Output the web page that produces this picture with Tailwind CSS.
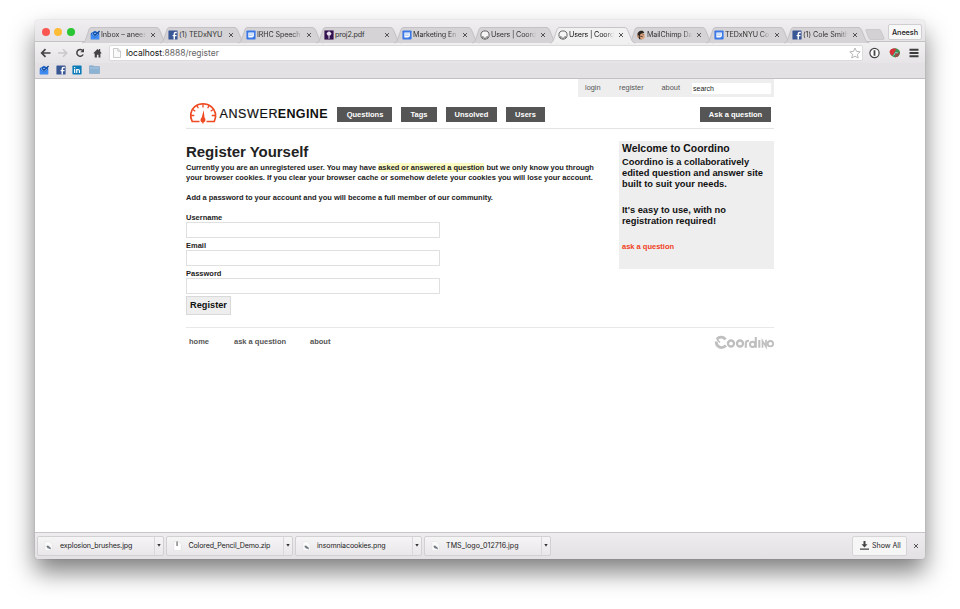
<!DOCTYPE html>
<html lang="en">
<head>
<meta charset="utf-8">
<title>Users | Coordino</title>
<script src="https://cdn.jsdelivr.net/npm/@tailwindcss/browser@4"></script>
</head>
<body class="h-[609px] w-[960px] overflow-hidden bg-white pt-5 pl-[35px] font-['Liberation_Sans',Arial,sans-serif]">
<svg class="hidden">
  <defs>
    <symbol id="inbox" viewBox="0 0 12 12"><path d="M1 4 6 1l5 3v7H1z" fill="#1a5fc4"/><path d="M1 5l5 4 5-4v6H1z" fill="#3f8cf4"/><path d="M2.500 3.500h7v2L6 8 2.500 5.500z" fill="#8cc1ff"/><path d="M3.500 4l2.500 2.300 5.500-5" fill="none" stroke="#164c9e" stroke-width="1.700"/></symbol>
    <symbol id="fb" viewBox="0 0 12 12"><rect x=".5" y=".5" width="11" height="11" rx=".8" fill="#3a5795"/><path d="M10.500 3H9.300C8 3 7.500 3.700 7.500 4.800V11.500M5.500 6.700h4.700" fill="none" stroke="#fff" stroke-width="1.700"/></symbol>
    <symbol id="doc" viewBox="0 0 12 12"><rect x=".5" y=".5" width="11" height="11" rx="1" fill="#3b78e7"/><path d="M2.800 3h6.700v4.500L7.500 9H2.800z" fill="#fff"/><path d="M3.500 4.700H9M3.500 6.500H8" stroke="#8ab4f8" stroke-width=".8"/></symbol>
    <symbol id="nyu" viewBox="0 0 12 12"><rect x=".5" y=".5" width="11" height="11" fill="#34114f"/><path d="M6 6v4.500" stroke="#e9dff0" stroke-width="1.300"/><path d="M3 4.500C3.500 2 5 3 6 1.500 7 3 8.500 2 9 4.500L7.500 6.500h-3z" fill="#e9dff0"/></symbol>
    <symbol id="coord" viewBox="0 0 12 12"><circle cx="6" cy="6" r="4.900" fill="#f5f5f5" stroke="#666" stroke-width="1.200"/><path d="M3.500 9.700V7.500M6 11V9M8.500 9.700V7.500" stroke="#666" stroke-width="1.600"/></symbol>
    <symbol id="chimp" viewBox="0 0 12 12"><path d="M2 7C1 3 4 .5 8 1l2 2-2 1.500L7 11H4z" fill="#2b2421"/><path d="M5 6c0-2 4-3 5-1l.8 3.500L8.500 11H5.500L4.500 8z" fill="#d9a27c"/><path d="M5 7.500l3 .5M8 5.500h1" stroke="#2b2421" stroke-width=".9"/><circle cx="2.600" cy="7.700" r="1.300" fill="#c08058"/></symbol>
    <symbol id="tab" viewBox="0 0 88 17"><path d="M0 16C2.500 15.500 3 14.500 4 11.500L6.500 4C7.300 1.300 8 .5 10 .5H74C76 .5 77 1.300 78 4L81 11.500C82 14.500 83 15.500 85.500 16" stroke="#bcbabc" stroke-width=".8"/></symbol>
    <symbol id="file" viewBox="0 0 10 11"><path d="M1 .5h5L9 3.500v7H1z" fill="#fafafa" stroke="#e0e0e0" stroke-width=".5"/><path d="M2.500 5.500l2-.5 3 2.500V9.300L6 8.500 4 8z" fill="#727b86"/></symbol>
  </defs>
</svg>

<main class="flex h-[539px] w-[890px] flex-col overflow-hidden rounded-[4px] bg-white shadow-[0_13px_25px_rgba(0,0,0,0.5),0_0_1px_rgba(0,0,0,0.35)]">
  <!-- Tab strip -->
  <div class="flex h-[22px] shrink-0 border-b border-[#c4c2c4] bg-linear-to-b from-[#f0eef0] to-[#e5e3e5] pt-[7px] font-[Inter,sans-serif] text-[7.200px] tracking-[-0.060px] text-[#333]">
    <div class="flex w-[47px] shrink-0 gap-[4.500px] pt-[1px] pl-[6.500px]">
      <i class="size-[8px] rounded-full bg-[#fc5652]"></i><i class="size-[8px] rounded-full bg-[#fdbc38]"></i><i class="size-[8px] rounded-full bg-[#29c535]"></i>
    </div>
    <div class="relative flex w-[78px] shrink-0 items-center pt-[1px] pl-2 leading-[14px]"><svg class="absolute top-0 left-0 h-[17px] w-[88px] fill-[#d5d3d5]"><use href="#tab"/></svg><svg class="relative mr-[1px] size-[10px] shrink-0"><use href="#inbox"/></svg><span class="relative w-[45px] shrink-0 mask-r-from-80% mask-r-to-100% whitespace-nowrap">Inbox – anees</span><svg class="relative ml-[4px] size-[6px] shrink-0" viewBox="0 0 6 6"><path d="M1 1l4 4M5 1l-4 4" stroke="#444" stroke-width=".9"/></svg></div>
    <div class="relative flex w-[78px] shrink-0 items-center pt-[1px] pl-2 leading-[14px]"><svg class="absolute top-0 left-0 h-[17px] w-[88px] fill-[#d5d3d5]"><use href="#tab"/></svg><svg class="relative mr-[1px] size-[10px] shrink-0"><use href="#fb"/></svg><span class="relative w-[45px] shrink-0 whitespace-nowrap">(1) TEDxNYU</span><svg class="relative ml-[4px] size-[6px] shrink-0" viewBox="0 0 6 6"><path d="M1 1l4 4M5 1l-4 4" stroke="#444" stroke-width=".9"/></svg></div>
    <div class="relative flex w-[78px] shrink-0 items-center pt-[1px] pl-2 leading-[14px]"><svg class="absolute top-0 left-0 h-[17px] w-[88px] fill-[#d5d3d5]"><use href="#tab"/></svg><svg class="relative mr-[1px] size-[10px] shrink-0"><use href="#doc"/></svg><span class="relative w-[45px] shrink-0 mask-r-from-80% mask-r-to-100% tracking-[-0.150px] whitespace-nowrap">IRHC Speech</span><svg class="relative ml-[4px] size-[6px] shrink-0" viewBox="0 0 6 6"><path d="M1 1l4 4M5 1l-4 4" stroke="#444" stroke-width=".9"/></svg></div>
    <div class="relative flex w-[78px] shrink-0 items-center pt-[1px] pl-2 leading-[14px]"><svg class="absolute top-0 left-0 h-[17px] w-[88px] fill-[#d5d3d5]"><use href="#tab"/></svg><svg class="relative mr-[1px] size-[10px] shrink-0"><use href="#nyu"/></svg><span class="relative w-[45px] shrink-0 tracking-[-0.150px] whitespace-nowrap">proj2.pdf</span><svg class="relative ml-[4px] size-[6px] shrink-0" viewBox="0 0 6 6"><path d="M1 1l4 4M5 1l-4 4" stroke="#444" stroke-width=".9"/></svg></div>
    <div class="relative flex w-[78px] shrink-0 items-center pt-[1px] pl-2 leading-[14px]"><svg class="absolute top-0 left-0 h-[17px] w-[88px] fill-[#d5d3d5]"><use href="#tab"/></svg><svg class="relative mr-[1px] size-[10px] shrink-0"><use href="#doc"/></svg><span class="relative w-[45px] shrink-0 mask-r-from-80% mask-r-to-100% tracking-[-0.100px] whitespace-nowrap">Marketing En</span><svg class="relative ml-[4px] size-[6px] shrink-0" viewBox="0 0 6 6"><path d="M1 1l4 4M5 1l-4 4" stroke="#444" stroke-width=".9"/></svg></div>
    <div class="relative flex w-[78px] shrink-0 items-center pt-[1px] pl-2 leading-[14px]"><svg class="absolute top-0 left-0 h-[17px] w-[88px] fill-[#d5d3d5]"><use href="#tab"/></svg><svg class="relative mr-[1px] size-[10px] shrink-0"><use href="#coord"/></svg><span class="relative w-[45px] shrink-0 mask-r-from-80% mask-r-to-100% tracking-[-0.150px] whitespace-nowrap">Users | Coord</span><svg class="relative ml-[4px] size-[6px] shrink-0" viewBox="0 0 6 6"><path d="M1 1l4 4M5 1l-4 4" stroke="#444" stroke-width=".9"/></svg></div>
    <div class="relative z-10 flex w-[78px] shrink-0 items-center pt-[1px] pl-2 leading-[14px] text-[#111]"><svg class="absolute top-0 left-0 h-[17px] w-[88px] fill-[#f2f1f2]"><use href="#tab"/></svg><svg class="relative mr-[1px] size-[10px] shrink-0"><use href="#coord"/></svg><span class="relative w-[45px] shrink-0 mask-r-from-80% mask-r-to-100% tracking-[-0.150px] whitespace-nowrap">Users | Coord</span><svg class="relative ml-[4px] size-[6px] shrink-0" viewBox="0 0 6 6"><path d="M1 1l4 4M5 1l-4 4" stroke="#444" stroke-width=".9"/></svg></div>
    <div class="relative flex w-[78px] shrink-0 items-center pt-[1px] pl-2 leading-[14px]"><svg class="absolute top-0 left-0 h-[17px] w-[88px] fill-[#d5d3d5]"><use href="#tab"/></svg><svg class="relative mr-[1px] size-[10px] shrink-0"><use href="#chimp"/></svg><span class="relative w-[45px] shrink-0 mask-r-from-80% mask-r-to-100% tracking-[-0.150px] whitespace-nowrap">MailChimp Da</span><svg class="relative ml-[4px] size-[6px] shrink-0" viewBox="0 0 6 6"><path d="M1 1l4 4M5 1l-4 4" stroke="#444" stroke-width=".9"/></svg></div>
    <div class="relative flex w-[78px] shrink-0 items-center pt-[1px] pl-2 leading-[14px]"><svg class="absolute top-0 left-0 h-[17px] w-[88px] fill-[#d5d3d5]"><use href="#tab"/></svg><svg class="relative mr-[1px] size-[10px] shrink-0"><use href="#doc"/></svg><span class="relative w-[45px] shrink-0 mask-r-from-80% mask-r-to-100% tracking-[-0.120px] whitespace-nowrap">TEDxNYU Co</span><svg class="relative ml-[4px] size-[6px] shrink-0" viewBox="0 0 6 6"><path d="M1 1l4 4M5 1l-4 4" stroke="#444" stroke-width=".9"/></svg></div>
    <div class="relative flex w-[78px] shrink-0 items-center pt-[1px] pl-2 leading-[14px]"><svg class="absolute top-0 left-0 h-[17px] w-[88px] fill-[#d5d3d5]"><use href="#tab"/></svg><svg class="relative mr-[1px] size-[10px] shrink-0"><use href="#fb"/></svg><span class="relative w-[45px] shrink-0 mask-r-from-80% mask-r-to-100% whitespace-nowrap">(1) Cole Smith</span><svg class="relative ml-[4px] size-[6px] shrink-0" viewBox="0 0 6 6"><path d="M1 1l4 4M5 1l-4 4" stroke="#444" stroke-width=".9"/></svg></div>
    <svg class="mt-[2px] ml-[3px] h-[12px] w-[20px] shrink-0" viewBox="0 0 20 12"><path d="M.8 1.200Q.5.500 1.500.500H14Q15.500.500 16 2L19 9Q19.500 10.500 18 10.500H6Q4.300 10.500 3.700 9z" fill="#d3d1d3" stroke="#bfbdbf" stroke-width=".6"/></svg>
    <div class="mt-[-3px] ml-[3px] h-[16px] w-[34px] shrink-0 rounded-[2px] border border-[#d0ced0] bg-[#f9f8f9] text-center text-[7.300px] leading-[15px] font-medium text-[#222]">Aneesh</div>
  </div>
  <!-- Toolbar -->
  <div class="flex h-[21px] shrink-0 items-center bg-linear-to-b from-[#f2f1f2] to-[#e6e4e6] pl-[5px]">
    <svg class="h-[12px] w-[66px] shrink-0" viewBox="0 0 66 12" fill="none" stroke="#444"><path d="M10.500 6H2M5.500 2.200 1.700 6l3.800 3.800" stroke-width="1.700"/><path d="M18 6h8.500M23 2.200 26.800 6 23 9.800" stroke="#c9c7c9" stroke-width="1.400"/><path d="M43 3.800A3.400 3.400 0 1 0 43.200 7.500" stroke-width="1.500"/><path d="M44 1.500V5.200H40.300z" fill="#444" stroke="none"/><path d="M53.500 6 57.500 2 59 3.300V2h1.200v2.500L61.600 6l-.7.700-.5-.4v4.200H58.500V7.800H56.900v2.700H54.700V6.300l-.6.500z" fill="#444" stroke="none"/></svg>
    <div class="ml-[3px] flex h-[16px] w-[754px] shrink-0 items-center rounded-[2px] border border-[#dcdadc] bg-white">
      <svg class="ml-[3px] h-[10px] w-[8px]" viewBox="0 0 8 10"><path d="M.5.500H4.800L7.500 3.200V9.500H.5zM4.800.500V3.200H7.500" fill="#fafafa" stroke="#b5b5b5" stroke-width=".7"/></svg>
      <span class="ml-[5px] font-[Inter,sans-serif] text-[8.500px] leading-[14px] tracking-[-0.030px] whitespace-nowrap text-[#666]"><span class="text-[#111]">localhost</span>:8888/register</span>
      <svg class="mr-[1px] ml-auto size-[12px]" viewBox="0 0 12 12"><path d="M6 1l1.500 3.400 3.700.4-2.800 2.500.8 3.700L6 9.100 2.800 11l.8-3.700L.8 4.800l3.700-.4z" fill="#fff" stroke="#999" stroke-width=".7"/></svg>
    </div>
    <svg class="ml-[5px] h-[12px] w-[54px] shrink-0" viewBox="0 0 54 12"><circle cx="6.500" cy="6" r="4.600" fill="#fff" stroke="#444" stroke-width="1.200"/><path d="M6.500 3.300v5.400" stroke="#444" stroke-width="1.800"/><path d="M22 6.500C21 3 25 .5 28.500 1.500S33 6 31 8.500 24 11 22 6.500z" fill="#3f9455"/><path d="M21.500 5C22 1.500 26 .8 28.500 2.300L27 4l-2 4.500-2-.5z" fill="#d9303a"/><path d="M27.500 6 32 5.500 30 9.500 27 10.500z" fill="#a04a48"/><path d="M25.500 8.500l2-3 2.500.5" stroke="#7ed5c9" fill="none"/><path d="M41.500 2.700h9M41.500 6h9M41.500 9.300h9" stroke="#3c3c3c" stroke-width="1.900"/></svg>
  </div>
  <!-- Bookmarks bar -->
  <div class="flex h-[16px] shrink-0 items-center gap-[6.500px] border-b border-[#c2c0c2] bg-[#e3e1e4] pb-[2px] pl-[4px]">
    <svg class="size-[10px]"><use href="#inbox"/></svg>
    <svg class="size-[10px]"><use href="#fb"/></svg>
    <svg class="size-[10px]" viewBox="0 0 12 12"><rect x=".5" y=".5" width="11" height="11" rx="1" fill="#0d7bb8"/><path d="M3.200 4.800V9.500M3.200 2.300v1.500M5.700 4.800V9.500M5.700 7C5.700 4.800 8.900 4.800 8.900 7V9.500" fill="none" stroke="#fff" stroke-width="1.400"/></svg>
    <svg class="h-[9px] w-[11px]" viewBox="0 0 11 9"><path d="M.5.800h3.800l.8.800h5.400V8.500H.5z" fill="#8db3d4" stroke="#7fa3c4" stroke-width=".6"/><path d="M.8 3h9.400" stroke="#b3cde3" stroke-width=".8"/></svg>
  </div>

  <!-- Page -->
  <div class="flex min-h-0 flex-1 flex-col pl-[151px]">
    <div class="flex w-[588px] flex-1 flex-col font-bold text-[#222]">
      <nav class="ml-auto flex h-[18px] w-[196px] items-center bg-[#eee] pl-[7px] text-[7.400px] font-normal text-[#555]">
        <a class="w-[34px]">login</a><a class="w-[42.500px]">register</a><a class="w-[30px]">about</a>
        <span class="h-[11px] w-[79px] bg-white pl-[1.500px] text-[7px] leading-[11px] text-[#222]">search</span>
      </nav>
      <header class="flex h-[32px] shrink-0 items-start border-b border-[#e3e3e3] text-[7.500px] leading-[15px] text-white">
        <svg class="mt-[5px] h-[24px] w-[151px] shrink-0" viewBox="0 0 151 24">
          <path d="M13.500 19.500H6.200C3.500 14 4.500 8 8.500 4.800 13.500.7 20.500.700 25.500 4.800 29.500 8 31 14 28.300 19.500H20.500" fill="none" stroke="#ee4a23" stroke-width="1.700"/>
          <path d="M17 2v3.500M11 3.500l1.300 2.800M23 3.500l-1.300 2.800M6.800 7.500l2.500 1.800M27.200 7.500l-2.500 1.800M4.800 13.500H8.300M29.200 13.500H25.700" stroke="#ee4a23" stroke-width="1.300"/>
          <path d="M17.700 8 18.500 15.500C20.200 17.500 19.500 20 17.500 20.500L17 22.500 16.300 20.500C14.300 20 13.800 17.500 15.700 15.500z" fill="#ee4a23"/>
          <text x="33.500" y="15.700" font-size="12.500" font-weight="400" fill="#111" stroke="#111" stroke-width=".2" textLength="58" lengthAdjust="spacing">ANSWER</text>
          <text x="91.800" y="15.700" font-size="12.500" font-weight="700" fill="#111" textLength="49.700" lengthAdjust="spacing">ENGINE</text>
        </svg>
        <a class="mt-[10px] mr-[9px] w-[55px] bg-[#555] pl-[1px] text-center">Questions</a>
        <a class="mt-[10px] mr-[9px] w-[36px] bg-[#555] text-center">Tags</a>
        <a class="mt-[10px] mr-[9px] w-[51px] bg-[#555] text-center">Unsolved</a>
        <a class="mt-[10px] w-[39px] bg-[#555] text-center">Users</a>
        <a class="mt-[10px] mr-[3px] ml-auto w-[71px] bg-[#555] text-center">Ask a question</a>
      </header>
      <div class="flex h-[199px] shrink-0 justify-between border-b border-[#e8e8e8] pt-[12px]">
        <section class="w-[420px] text-[7.500px] leading-[9.500px]">
          <h1 class="h-[22px] text-[15px] leading-[21px] tracking-[-0.030px] whitespace-nowrap">Register Yourself</h1>
          <p class="tracking-[-0.033px] whitespace-nowrap">Currently you are an unregistered user. You may have <span class="bg-[#fbfbc4]">asked or answered a question</span> but we only know you through<br>your browser cookies. If you clear your browser cache or somehow delete your cookies you will lose your account.</p>
          <p class="mt-[11px] tracking-[-0.033px] whitespace-nowrap">Add a password to your account and you will become a full member of our community.</p>
          <form class="mt-[9.500px]">
            <label class="block h-[10px] leading-[12px]">Username</label><div class="mb-[2px] h-[16px] w-[254px] border border-[#e0e0e0]"></div>
            <label class="block h-[10px] leading-[12px]">Email</label><div class="mb-[2px] h-[16px] w-[254px] border border-[#e0e0e0]"></div>
            <label class="block h-[10px] leading-[12px]">Password</label><div class="mb-[2px] h-[16px] w-[254px] border border-[#e0e0e0]"></div>
            <button type="button" class="block h-[19px] w-[45px] border border-[#d9d9d9] bg-[#eee] text-[9.200px] leading-[17px] font-bold text-[#111]">Register</button>
          </form>
        </section>
        <aside class="h-[128px] w-[155px] bg-[#eee] pt-[1px] pl-[3px] text-[9.300px] leading-[11.200px] text-[#111]">
          <h2 class="h-[15px] text-[10.450px] leading-[14px]">Welcome to Coordino</h2>
          <p class="whitespace-nowrap">Coordino is a collaboratively<br>edited question and answer site<br>built to suit your needs.</p>
          <p class="mt-[14px] whitespace-nowrap">It's easy to use, with no<br>registration required!</p>
          <p class="mt-[14px] text-[7.500px] text-[#f0401c]">ask a question</p>
        </aside>
      </div>
      <footer class="flex h-[28px] items-center pl-[3px] text-[7.500px] text-[#555]">
        <a class="w-[45px]">home</a><a class="w-[76px]">ask a question</a><a>about</a>
        <svg class="ml-auto h-[15px] w-[60px]" viewBox="0 0 60 15" fill="none" stroke="#bfbfbf" stroke-width="2.300" role="img" aria-label="Coordino"><path d="M11.500 4.500C9.500 1.200 4.500 1.300 3 4.500M2.200 6.500C2 12.500 8 14.300 12 10.500" stroke-width="2.800"/><path d="M3 4.500 6 7.500" stroke-width="1.500"/><circle cx="17" cy="8.500" r="3"/><circle cx="26" cy="8.500" r="3"/><path d="M31.800 12.800V8.500Q31.800 5.500 35 5.800M41.800 2V12.800M45.300 5v7.800" stroke-width="2.100"/><circle cx="38.600" cy="9.300" r="2.600" stroke-width="2"/><path d="M48.500 12.800V6L52 11.500V4.800" stroke-width="1.700"/><circle cx="56.400" cy="8.700" r="2.700" stroke-width="1.800"/></svg>
      </footer>
    </div>
  </div>

  <!-- Downloads shelf -->
  <div class="flex h-[27px] shrink-0 items-center gap-[2px] border-t border-[#c8c6c8] bg-linear-to-b from-[#eeecee] to-[#e3e1e3] pr-[6px] pb-[1px] pl-[2px] font-[Inter,sans-serif] text-[7.100px] text-[#222]">
    <div class="flex h-[20px] w-[127px] items-center rounded-[2px] border border-[#d2d0d2] bg-linear-to-b from-[#f6f5f6] to-[#e9e7e9]"><svg class="ml-[6px] h-[10px] w-[9px]"><use href="#file"/></svg><span class="ml-[7px] pt-[1px] tracking-[-0.130px]">explosion_brushes.jpg</span><span class="ml-auto flex h-full w-[9px] items-center justify-center border-l border-[#dad8da]"><svg class="h-[3px] w-[4px]" viewBox="0 0 4 3"><path d="M.3 0h3.400L2 2.700z" fill="#333"/></svg></span></div>
    <div class="flex h-[20px] w-[127px] items-center rounded-[2px] border border-[#d2d0d2] bg-linear-to-b from-[#f6f5f6] to-[#e9e7e9]"><svg class="ml-[6px] h-[10px] w-[9px]" viewBox="0 0 10 11"><path d="M1 .5h5L9 3.500v7H1z" fill="#fff" stroke="#d8d8d8" stroke-width=".5"/><path d="M4.500.500v5" stroke="#555" stroke-width="1.200"/></svg><span class="ml-[6.500px] pt-[1px] tracking-[-0.160px]">Colored_Pencil_Demo.zip</span><span class="ml-auto flex h-full w-[9px] items-center justify-center border-l border-[#dad8da]"><svg class="h-[3px] w-[4px]" viewBox="0 0 4 3"><path d="M.3 0h3.400L2 2.700z" fill="#333"/></svg></span></div>
    <div class="flex h-[20px] w-[127px] items-center rounded-[2px] border border-[#d2d0d2] bg-linear-to-b from-[#f6f5f6] to-[#e9e7e9]"><svg class="ml-[6px] h-[10px] w-[9px]"><use href="#file"/></svg><span class="ml-[6px] pt-[1px] tracking-[-0.130px]">insomniacookies.png</span><span class="ml-auto flex h-full w-[9px] items-center justify-center border-l border-[#dad8da]"><svg class="h-[3px] w-[4px]" viewBox="0 0 4 3"><path d="M.3 0h3.400L2 2.700z" fill="#333"/></svg></span></div>
    <div class="flex h-[20px] w-[127px] items-center rounded-[2px] border border-[#d2d0d2] bg-linear-to-b from-[#f6f5f6] to-[#e9e7e9]"><svg class="ml-[6px] h-[10px] w-[9px]"><use href="#file"/></svg><span class="ml-[6px] pt-[1px] tracking-[0.050px]">TMS_logo_012716.jpg</span><span class="ml-auto flex h-full w-[9px] items-center justify-center border-l border-[#dad8da]"><svg class="h-[3px] w-[4px]" viewBox="0 0 4 3"><path d="M.3 0h3.400L2 2.700z" fill="#333"/></svg></span></div>
    <div class="ml-auto flex h-[20px] w-[55px] items-center gap-[3px] rounded-[2px] border border-[#d6d4d6] bg-[#f7f6f7] pl-[7px]"><svg class="size-[9px]" viewBox="0 0 9 9"><path d="M3.500 0h2v3.300H7.500L4.500 6.500 1.500 3.300h2zM0 7.500h9v1.200H0z" fill="#444"/></svg><span class="pt-[1px] tracking-[-0.050px]">Show All</span></div>
    <svg class="ml-[4px] size-[6px]" viewBox="0 0 6 6"><path d="M1 1l4 4M5 1l-4 4" stroke="#444" stroke-width=".9"/></svg>
  </div>
</main>
</body>
</html>
